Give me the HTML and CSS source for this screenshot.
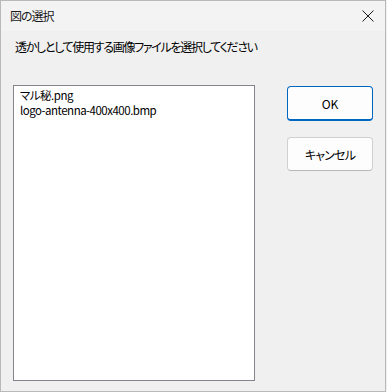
FILE: index.html
```html
<!DOCTYPE html>
<html lang="ja">
<head>
<meta charset="utf-8">
<link rel="stylesheet" href="styles.css">
</head>
<body>
<div class="window">
  <div class="titlebar">
    <span class="title">図の選択</span>
    <svg class="close" width="12" height="12" viewBox="0 0 12 12"><path d="M0.5 0.5 L11.5 11.5 M11.5 0.5 L0.5 11.5" stroke="#1a1a1a" stroke-width="1" fill="none"/></svg>
  </div>
  <div class="content">
    <div class="label">透かしとして使用する画像ファイルを選択してください</div>
    <div class="main">
      <div class="listbox">
        <div class="item">マル秘.png</div>
        <div class="item">logo-antenna-400x400.bmp</div>
      </div>
      <div class="buttons">
        <button class="btn btn-default">OK</button>
        <button class="btn btn-cancel">キャンセル</button>
      </div>
    </div>
  </div>
</div>
</body>
</html>
```

FILE: styles.css
```css
html, body {
  margin: 0;
  padding: 0;
  background: #f0f0f0;
}
body {
  width: 387px;
  height: 392px;
  overflow: hidden;
  font-family: "Noto Sans CJK JP", "Noto Sans", sans-serif;
  font-size: 12px;
  color: #000;
  font-feature-settings: "palt";
}
.window {
  box-sizing: border-box;
  width: 386px;
  height: 392px;
  border: 1px solid #b9b9b9;
  background: #f0f0f0;
  display: flex;
  flex-direction: column;
}
.titlebar {
  height: 30px;
  background: #f3f3f3;
  display: flex;
  align-items: center;
  justify-content: space-between;
  padding: 0 11px 0 9px;
}
.title {
  font-size: 12px;
  line-height: 16px;
  color: #1a1a1a;
  letter-spacing: -1px;
}
.close {
  display: block;
  margin-top: -1px;
}
.content {
  flex: 1;
  display: flex;
  flex-direction: column;
  padding: 8px 0 0 12px;
}
.label {
  margin-left: 2px;
  line-height: 16px;
  height: 16px;
  letter-spacing: -1.3px;
}
.main {
  display: flex;
  margin-top: 30px;
}
.listbox {
  box-sizing: border-box;
  width: 242px;
  height: 296px;
  background: #fff;
  border: 1px solid #82858c;
  padding: 2px 0 0 6px;
}
.item {
  line-height: 15px;
  height: 15px;
  font-size: 11.5px;
  font-family: "Noto Sans CJK JP", sans-serif;
  letter-spacing: -0.5px;
}
.buttons {
  display: flex;
  flex-direction: column;
  gap: 16px;
  margin-left: 32px;
  margin-top: 1px;
}
.btn {
  box-sizing: border-box;
  width: 86px;
  height: 34px;
  background: #fdfdfd;
  border: 1px solid #d0d0d0;
  border-bottom-color: #b8b8b8;
  border-radius: 4px;
  font-family: "Noto Sans CJK JP", sans-serif;
  font-size: 12px;
  color: #000;
  padding: 0;
  font-feature-settings: "palt";
}
.btn-cancel {
  letter-spacing: -0.8px;
}
.btn-default {
  border: 1px solid #0067c0;
  border-bottom: 2px solid #0067c0;
  height: 35px;
}
```
